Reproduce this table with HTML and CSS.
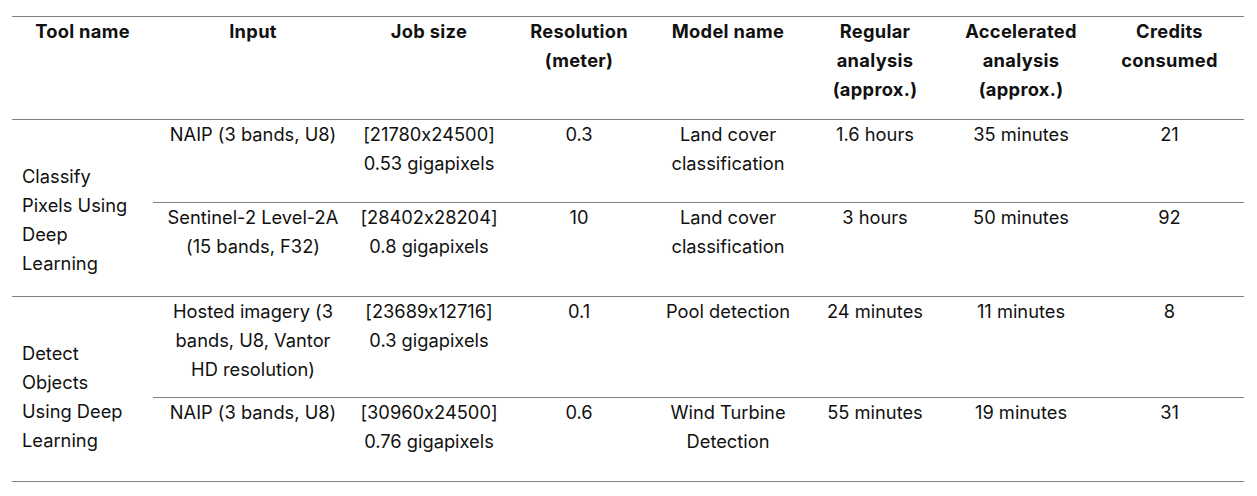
FILE: index.html
```html
<!DOCTYPE html>
<html>
<head>
<meta charset="utf-8">
<link rel="stylesheet" href="styles.css">
</head>
<body>
<table class="grid">
  <colgroup>
    <col class="c1"><col class="c2"><col class="c3"><col class="c4"><col class="c5"><col class="c6"><col class="c7"><col class="c8">
  </colgroup>
  <thead>
    <tr class="head">
      <th>Tool name</th>
      <th>Input</th>
      <th>Job size</th>
      <th>Resolution<br>(meter)</th>
      <th>Model name</th>
      <th>Regular<br>analysis<br>(approx.)</th>
      <th>Accelerated<br>analysis<br>(approx.)</th>
      <th>Credits<br>consumed</th>
    </tr>
  </thead>
  <tbody>
    <tr class="r1">
      <td class="tool" rowspan="2">Classify<br>Pixels Using<br>Deep<br>Learning</td>
      <td>NAIP (3 bands, U8)</td>
      <td>[21780x24500]<br>0.53 gigapixels</td>
      <td>0.3</td>
      <td>Land cover<br>classification</td>
      <td>1.6 hours</td>
      <td>35 minutes</td>
      <td>21</td>
    </tr>
    <tr class="r2 split">
      <td>Sentinel-2 Level-2A<br>(15 bands, F32)</td>
      <td>[28402x28204]<br>0.8 gigapixels</td>
      <td>10</td>
      <td>Land cover<br>classification</td>
      <td>3 hours</td>
      <td>50 minutes</td>
      <td>92</td>
    </tr>
    <tr class="r3 group">
      <td class="tool" rowspan="2">Detect<br>Objects<br>Using Deep<br>Learning</td>
      <td>Hosted imagery (3<br>bands, U8, Vantor<br>HD resolution)</td>
      <td>[23689x12716]<br>0.3 gigapixels</td>
      <td>0.1</td>
      <td>Pool detection</td>
      <td>24 minutes</td>
      <td>11 minutes</td>
      <td>8</td>
    </tr>
    <tr class="r4 split">
      <td>NAIP (3 bands, U8)</td>
      <td>[30960x24500]<br>0.76 gigapixels</td>
      <td>0.6</td>
      <td>Wind Turbine<br>Detection</td>
      <td>55 minutes</td>
      <td>19 minutes</td>
      <td>31</td>
    </tr>
  </tbody>
</table>
</body>
</html>
```

FILE: styles.css
```css
html, body {
  margin: 0;
  padding: 0;
  background: #ffffff;
}

body {
  padding: 16px 0 0 12px;
  font-family: Inter, "Liberation Sans", sans-serif;
  font-size: 18.3px;
  line-height: 29px;
  color: #111111;
  font-feature-settings: "calt" 0;
  font-variant-ligatures: no-contextual;
}

.grid {
  border-collapse: collapse;
  table-layout: fixed;
  width: 1232px;
  border-top: 1px solid #808080;
  border-bottom: 1px solid #808080;
}

.c1 { width: 141px; }
.c2 { width: 200px; }
.c3 { width: 152px; }
.c4 { width: 148px; }
.c5 { width: 150px; }
.c6 { width: 144px; }
.c7 { width: 148px; }
.c8 { width: 149px; }

th, td {
  padding: 0;
  text-align: center;
  vertical-align: top;
}

th {
  font-weight: 700;
  letter-spacing: 0.3px;
}

.head {
  height: 103px;
  border-bottom: 1px solid #808080;
}

.r1 { height: 83px; }
.r2 { height: 94px; }
.r3 { height: 101px; }
.r4 { height: 84px; }

.split td {
  border-top: 1px solid #808080;
}

.group td {
  border-top: 1px solid #808080;
}

td.tool {
  text-align: left;
  padding: 42px 0 0 10px;
}
```
